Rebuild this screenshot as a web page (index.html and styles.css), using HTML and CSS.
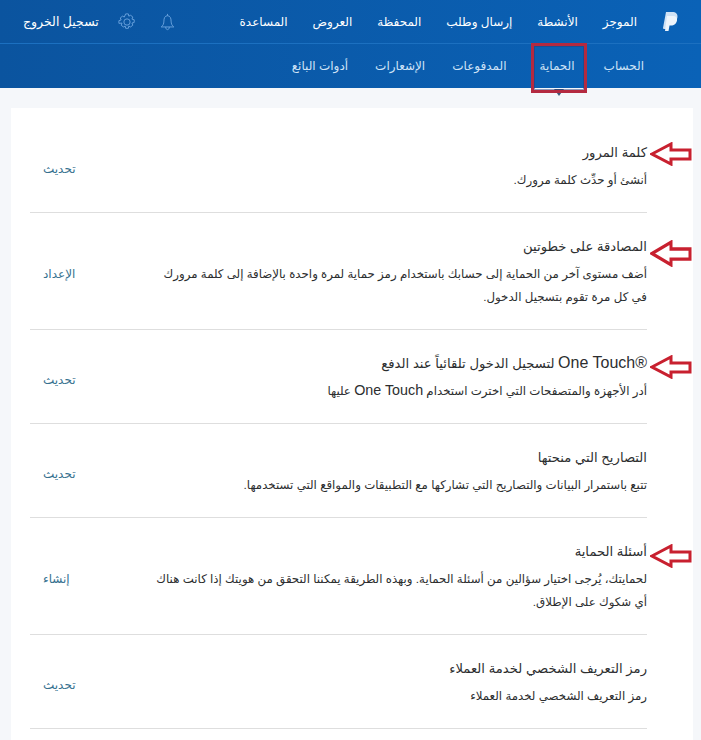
FILE: index.html
```html
<!DOCTYPE html>
<html lang="ar" dir="rtl">
<head>
  <meta charset="UTF-8">
  <title>الحماية</title>
  <link rel="stylesheet" href="styles.css">
</head>
<body>

  <header class="top">
    <div class="main-nav">
      <svg class="logo" width="16" height="20" viewBox="0 0 16 20">
        <path d="M4 0h6c4 0 6 2 5.400 5.500C14.800 9 12 11 8.500 11H6.500L5.500 17H1.500L1 16Z" fill="#cfe2f5"/>
        <path d="M5 4h6c3 0 4.500 1.500 4 4.500C14.500 11.500 12 13.500 9 13.500H7.500L6.500 19H3Z" fill="#eef5fc"/>
      </svg>
      <a href="#">الموجز</a>
      <a href="#">الأنشطة</a>
      <a href="#">إرسال وطلب</a>
      <a href="#">المحفظة</a>
      <a href="#">العروض</a>
      <a href="#">المساعدة</a>
      <div class="tools">
        <svg class="bell" width="15" height="18" viewBox="0 0 16 20" fill="none" stroke="#6ea6e0">
          <path d="M8 1v2M8 3c-3 0-4 3-4 6 0 3-1 5-3 6.500h14C13 14 12 12 12 9c0-3-1-6-4-6ZM6 15.500c0 2 1 3 2 3s2-1 2-3"/>
        </svg>
        <svg class="gear" width="18" height="18" viewBox="0 0 20 20" fill="none" stroke="#6ea6e0">
          <circle cx="10" cy="10" r="3.500"/>
          <path d="M8.500 1h3l.5 2.500 2-1 2.500 2-1 2.300 2.500.7v3l-2.500.7 1 2.300-2.500 2-2-1-.5 2.500h-3l-.5-2.500-2 1-2.500-2 1-2.300L1 11.500v-3l2.500-.7-1-2.300 2.500-2 2 1Z"/>
        </svg>
        <a href="#" class="logout">تسجيل الخروج</a>
      </div>
    </div>
    <nav class="sub-nav">
      <a href="#">الحساب</a>
      <a href="#" class="current">الحماية</a>
      <a href="#">المدفوعات</a>
      <a href="#">الإشعارات</a>
      <a href="#">أدوات البائع</a>
    </nav>
  </header>

  <main class="card">
    <section class="row">
      <div class="info">
        <h3>كلمة المرور</h3>
        <p>أنشئ أو حدِّث كلمة مرورك.</p>
      </div>
      <a href="#" class="action">تحديث</a>
      <svg class="arrow arrow-1" width="42" height="24" viewBox="0 0 42 24" preserveAspectRatio="none"><path d="M2 12 21 2v6h19v9H21v5Z"/></svg>
    </section>

    <section class="row">
      <div class="info">
        <h3>المصادقة على خطوتين</h3>
        <p>أضف مستوى آخر من الحماية إلى حسابك باستخدام رمز حماية لمرة واحدة بالإضافة إلى كلمة مرورك<br>في كل مرة تقوم بتسجيل الدخول.</p>
      </div>
      <a href="#" class="action">الإعداد</a>
      <svg class="arrow arrow-2" width="42" height="27" viewBox="0 0 42 24" preserveAspectRatio="none"><path d="M2 12 21 2v6h19v9H21v5Z"/></svg>
    </section>

    <section class="row">
      <div class="info">
        <h3><span class="latin">One Touch®</span> لتسجيل الدخول تلقائياً عند الدفع</h3>
        <p>أدر الأجهزة والمتصفحات التي اخترت استخدام <span class="latin">One Touch</span> عليها</p>
      </div>
      <a href="#" class="action">تحديث</a>
      <svg class="arrow arrow-3" width="42" height="24" viewBox="0 0 42 24" preserveAspectRatio="none"><path d="M2 12 21 2v6h19v9H21v5Z"/></svg>
    </section>

    <section class="row">
      <div class="info">
        <h3>التصاريح التي منحتها</h3>
        <p>تتبع باستمرار البيانات والتصاريح التي تشاركها مع التطبيقات والمواقع التي تستخدمها.</p>
      </div>
      <a href="#" class="action">تحديث</a>
    </section>

    <section class="row">
      <div class="info">
        <h3>أسئلة الحماية</h3>
        <p>لحمايتك، يُرجى اختيار سؤالين من أسئلة الحماية. وبهذه الطريقة يمكننا التحقق من هويتك إذا كانت هناك<br>أي شكوك على الإطلاق.</p>
      </div>
      <a href="#" class="action">إنشاء</a>
      <svg class="arrow arrow-5" width="42" height="24" viewBox="0 0 42 24" preserveAspectRatio="none"><path d="M2 12 21 2v6h19v9H21v5Z"/></svg>
    </section>

    <section class="row">
      <div class="info">
        <h3>رمز التعريف الشخصي لخدمة العملاء</h3>
        <p>رمز التعريف الشخصي لخدمة العملاء</p>
      </div>
      <a href="#" class="action">تحديث</a>
    </section>
  </main>

</body>
</html>
```

FILE: styles.css
```css
body {
  font-family: "Liberation Sans", "DejaVu Sans", sans-serif;
  background-color: #f5f7fa;
  margin: 0;
  height: 740px;
  overflow: hidden;
}

a {
  text-decoration: none;
}

.latin {
  direction: ltr;
  unicode-bidi: isolate;
  line-height: 1;
}

.top {
  height: 88px;
  background: linear-gradient(to left, #0a62b7, #0b549f);
}

.main-nav {
  height: 43px;
  display: flex;
  align-items: center;
  gap: 25px;
  padding: 0 23px;
  border-bottom: 1px solid #1c70c0;
}

.main-nav a {
  color: #fff;
  font-size: 12px;
}

.tools {
  display: flex;
  align-items: center;
  margin-right: auto;
  gap: 24px;
}

.tools .gear {
  margin-left: -5px;
}

.main-nav .logout {
  font-size: 12.5px;
}

.sub-nav {
  height: 44px;
  display: flex;
  align-items: center;
  gap: 27px;
  padding: 0 57px;
}

.sub-nav a {
  color: #cfe3f7;
  font-size: 12px;
  position: relative;
}

.sub-nav .current {
  margin: 0 2px 0 6px;
}

/* red box drawn on the screenshot */
.sub-nav .current::after {
  content: "";
  position: absolute;
  top: -16px;
  left: 50%;
  margin-left: -26px;
  width: 56px;
  height: 50px;
  box-sizing: border-box;
  border: 3px solid #b42a40;
  box-shadow: inset 0 0 0 1px rgba(40, 60, 120, 0.5);
}

.sub-nav .current::before {
  content: "";
  position: absolute;
  top: 30px;
  left: 50%;
  margin-left: -3px;
  border: 5px solid transparent;
  border-top: 7px solid #3d5878;
  border-bottom: 0;
}

.card {
  margin: 20px 8px 0 11px;
  background-color: white;
  padding: 11px 46px 20px 19px;
}

.row {
  display: flex;
  justify-content: space-between;
  align-items: center;
  padding: 22px 0 20px;
  border-bottom: 1px solid #dedede;
  position: relative;
}

.info h3 {
  margin: 0 0 4px;
  font-size: 13.2px;
  font-weight: normal;
  line-height: 24px;
  color: #2c2e2f;
}

.info h3 .latin {
  font-size: 16px;
}

.info p {
  margin: 0;
  font-size: 11.8px;
  line-height: 23px;
  color: #2c2e2f;
}

.info p .latin {
  font-size: 14.3px;
}

.action {
  margin: 4px 0 0 13px;
  font-size: 12px;
  color: #36718f;
}

.arrow {
  position: absolute;
  right: -45px;
}

.arrow path {
  fill: white;
  stroke: #c8202f;
  stroke-width: 3;
}

.arrow-1 { top: 23px; }
.arrow-2 { top: 27px; }
.arrow-3 { top: 25px; }
.arrow-5 { top: 26px; }
```
